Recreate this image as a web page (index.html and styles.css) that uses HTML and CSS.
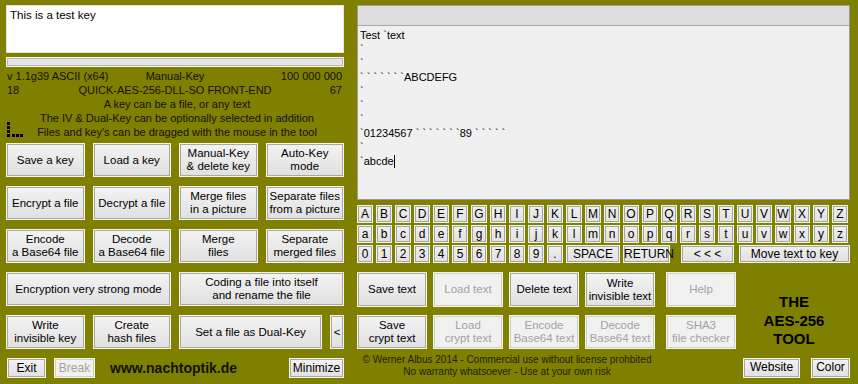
FILE: index.html
```html
<!DOCTYPE html>
<html lang="en">

<head>
    <meta charset="UTF-8">
    <title>Quick AES-256 Front-End</title>
    <link rel="stylesheet" href="styles.css">
</head>

<body>

    <div id="app">

        <!-- Left column: key, info and file functions -->
        <div class="left-col">
            <div class="key-box">This is a test key</div>
            <div class="progress"><div class="progress-inner"></div></div>

            <div class="info">
                <div class="info-row">
                    <span class="al-left">v 1.1g39 ASCII (x64)</span>
                    <span>Manual-Key</span>
                    <span class="al-right">100 000 000</span>
                </div>
                <div class="info-row">
                    <span class="al-left">18</span>
                    <span>QUICK-AES-256-DLL-SO FRONT-END</span>
                    <span class="al-right">67</span>
                </div>
                <div class="info-line">A key can be a file, or any text</div>
                <div class="info-line">The IV &amp; Dual-Key can be optionally selected in addition</div>
                <div class="info-line">Files and key's can be dragged with the mouse in the tool</div>

                <svg class="drag-icon" width="18" height="16" viewBox="0 0 18 16">
                    <rect x="1" y="0" width="3" height="3" fill="#000" />
                    <rect x="1" y="4" width="3" height="3" fill="#000" />
                    <rect x="1" y="8" width="3" height="3" fill="#000" />
                    <rect x="1" y="12" width="3" height="3" fill="#000" />
                    <rect x="6" y="12" width="3" height="3" fill="#000" />
                    <rect x="10" y="12" width="3" height="3" fill="#000" />
                    <rect x="14" y="12" width="3" height="3" fill="#000" />
                </svg>
            </div>

            <div class="file-grid">
                <button class="btn">Save a key</button>
                <button class="btn">Load a key</button>
                <button class="btn">Manual-Key<br>&amp; delete key</button>
                <button class="btn">Auto-Key<br>mode</button>

                <button class="btn">Encrypt a file</button>
                <button class="btn">Decrypt a file</button>
                <button class="btn">Merge files<br>in a picture</button>
                <button class="btn">Separate files<br>from a picture</button>

                <button class="btn">Encode<br>a Base64 file</button>
                <button class="btn">Decode<br>a Base64 file</button>
                <button class="btn">Merge<br>files</button>
                <button class="btn">Separate<br>merged files</button>

                <button class="btn span-2">Encryption very strong mode</button>
                <button class="btn span-2">Coding a file into itself<br>and rename the file</button>

                <button class="btn">Write<br>invisible key</button>
                <button class="btn">Create<br>hash files</button>
                <div class="span-2 dual-key">
                    <button class="btn dual-btn">Set a file as Dual-Key</button>
                    <button class="btn arrow-btn">&lt;</button>
                </div>
            </div>

            <div class="bottom-bar">
                <button class="btn small-btn exit-btn">Exit</button>
                <button class="btn small-btn break-btn" disabled>Break</button>
                <span class="site-name">www.nachtoptik.de</span>
                <button class="btn small-btn minimize-btn">Minimize</button>
            </div>
        </div>

        <!-- Right column: text editor, keyboard and text functions -->
        <div class="right-col">
            <div class="text-panel">
                <div class="text-header"></div>
                <div class="text-body">
                    <div class="text-line">Test `text</div>
                    <div class="text-line">`</div>
                    <div class="text-line">`</div>
                    <div class="text-line">` ` ` ` ` ` `ABCDEFG</div>
                    <div class="text-line">`</div>
                    <div class="text-line">`</div>
                    <div class="text-line">`</div>
                    <div class="text-line">`01234567 ` ` ` ` ` ` `89 ` ` ` ` `</div>
                    <div class="text-line">`</div>
                    <div class="text-line">`abcde<span class="caret"></span></div>
                </div>
            </div>

            <div class="keyboard">
                <div class="key-row" id="upper-row"></div>
                <div class="key-row" id="lower-row"></div>
                <div class="key-row" id="digit-row">
                    <button class="key space-key">SPACE</button>
                    <button class="key return-key">RETURN</button>
                    <button class="key back-key">&lt; &lt; &lt;</button>
                    <button class="key move-key">Move text to key</button>
                </div>
            </div>

            <div class="text-actions">
                <div class="text-left">
                    <div class="text-grid">
                        <button class="btn">Save text</button>
                        <button class="btn" disabled>Load text</button>
                        <button class="btn">Delete text</button>
                        <button class="btn">Write<br>invisible text</button>
                        <button class="btn help-btn" disabled>Help</button>

                        <button class="btn">Save<br>crypt text</button>
                        <button class="btn" disabled>Load<br>crypt text</button>
                        <button class="btn" disabled>Encode<br>Base64 text</button>
                        <button class="btn" disabled>Decode<br>Base64 text</button>
                        <button class="btn help-btn" disabled>SHA3<br>file checker</button>
                    </div>
                    <div class="copyright">
                        <div>&copy; Werner Albus 2014 - Commercial use without license prohbited</div>
                        <div>No warranty whatsoever - Use at your own risk</div>
                    </div>
                </div>

                <div class="text-right">
                    <div class="tool-title">THE<br>AES-256<br>TOOL</div>
                    <div class="corner-buttons">
                        <button class="btn small-btn website-btn">Website</button>
                        <button class="btn small-btn color-btn">Color</button>
                    </div>
                </div>
            </div>
        </div>

    </div>

    <script>
        // Build the letter rows of the on-screen keyboard
        function addKeys(rowId, chars, before) {
            const row = document.getElementById(rowId);
            chars.split('').forEach(ch => {
                const key = document.createElement('button');
                key.className = 'key';
                key.textContent = ch;
                row.insertBefore(key, before ? row.querySelector(before) : null);
            });
        }

        addKeys('upper-row', 'ABCDEFGHIJKLMNOPQRSTUVWXYZ');
        addKeys('lower-row', 'abcdefghijklmnopqrstuvwxyz');
        addKeys('digit-row', '0123456789.', '.space-key');
    </script>

</body>

</html>
```

FILE: styles.css
```css
html,
body {
    margin: 0;
    padding: 0;
}

body {
    width: 858px;
    height: 384px;
    overflow: hidden;
    background-color: #808000;
    font-family: "Liberation Sans", Arial, sans-serif;
    font-size: 11px;
    color: #000;
}

#app {
    display: flex;
    gap: 13px;
    padding: 5px 0 0 6px;
}

/* Left column */
.left-col {
    width: 338px;
}

.key-box {
    box-sizing: border-box;
    height: 48px;
    padding: 2px 3px;
    background-color: #fff;
    border: 1px solid #e4e4e4;
    font-size: 11.5px;
    line-height: 14px;
}

.progress {
    box-sizing: border-box;
    height: 10px;
    margin-top: 4px;
    border: 1px solid #f8f8f0;
}

.progress-inner {
    height: 100%;
    background-color: #e6e6e6;
    box-shadow: inset 0 0 0 1px #b4b4b4;
}

.info {
    position: relative;
    margin-top: 2px;
    line-height: 14px;
    color: #111;
}

.info-row {
    display: grid;
    grid-template-columns: 1fr auto 1fr;
    text-align: center;
}

.al-left {
    text-align: left;
    padding-left: 1px;
}

.al-right {
    text-align: right;
    padding-right: 2px;
}

.info-line {
    text-align: center;
    padding-left: 4px;
}

.drag-icon {
    position: absolute;
    left: 0;
    top: 53px;
}

/* Buttons */
.btn {
    box-sizing: border-box;
    margin: 0;
    padding: 0;
    border: 1px solid #f6f6e4;
    box-shadow: inset 0 0 0 1px #a8a8a8;
    background: linear-gradient(#f3f3f3, #e0e0e0);
    font-family: inherit;
    font-size: 11.5px;
    line-height: 13px;
    color: #000;
    text-align: center;
}

.btn:disabled {
    background: #f1f1f1;
    box-shadow: inset 0 0 0 1px #cfcfcf;
    color: #a2a2a2;
}

.file-grid {
    display: grid;
    grid-template-columns: repeat(4, 1fr);
    grid-auto-rows: 34px;
    column-gap: 8px;
    row-gap: 9px;
    margin-top: 4px;
}

.span-2 {
    grid-column: span 2;
}

.dual-key {
    display: flex;
    gap: 8px;
}

.dual-btn {
    flex: 1;
}

.arrow-btn {
    width: 14px;
}

.bottom-bar {
    display: flex;
    align-items: center;
    height: 20px;
    margin-top: 9px;
}

.small-btn {
    height: 20px;
    font-size: 12px;
}

.exit-btn {
    width: 39px;
    margin-left: 1px;
}

.break-btn {
    width: 41px;
    margin-left: 8px;
}

.site-name {
    margin-left: 15px;
    font-size: 14px;
    font-weight: bold;
    color: #111100;
}

.minimize-btn {
    width: 55px;
    margin-left: auto;
}

/* Right column */
.right-col {
    width: 493px;
}

.text-panel {
    box-sizing: border-box;
    height: 195px;
    border: 1px solid #9c9c9c;
    background-color: #f0f0f0;
}

.text-header {
    height: 19px;
    background-color: #dcdcdc;
    border-bottom: 1px solid #a8a8a8;
}

.text-body {
    padding: 2px 2px;
    line-height: 14px;
    color: #000;
}

.text-line {
    white-space: pre;
}

.caret {
    display: inline-block;
    width: 0;
    height: 13px;
    border-left: 1px solid #000;
    vertical-align: -3px;
}

/* On-screen keyboard */
.keyboard {
    display: flex;
    flex-direction: column;
    gap: 2px;
    margin-top: 5px;
}

.key-row {
    display: flex;
    gap: 3px;
    height: 18px;
}

.key {
    box-sizing: border-box;
    width: 16px;
    height: 18px;
    margin: 0;
    padding: 0;
    border: 1px solid #f4f4e2;
    box-shadow: inset 0 0 0 1px #a6a6a6;
    background: linear-gradient(#f0f0f0, #e0e0e0);
    font-family: inherit;
    font-size: 12px;
    color: #000;
}

.space-key {
    width: 54px;
}

.return-key {
    width: 47px;
}

.back-key {
    width: 53px;
    margin-left: 8px;
}

.move-key {
    width: 111px;
    margin-left: 2px;
}

/* Text functions */
.text-actions {
    display: flex;
    margin-top: 9px;
}

.text-grid {
    display: grid;
    grid-template-columns: 70px 70px 70px 70px 75px;
    grid-template-rows: 35px 34px;
    column-gap: 6px;
    row-gap: 8px;
}

.help-btn {
    width: 70px;
    justify-self: end;
}

.copyright {
    width: 300px;
    margin-top: 5px;
    font-size: 10px;
    line-height: 12px;
    text-align: center;
    color: #1e1e10;
}

.text-right {
    display: flex;
    flex-direction: column;
    width: 114px;
}

.tool-title {
    padding-top: 21px;
    padding-left: 2px;
    font-size: 15px;
    font-weight: bold;
    line-height: 18.5px;
    text-align: center;
    color: #000;
}

.corner-buttons {
    display: flex;
    justify-content: flex-end;
    gap: 11px;
    margin-top: 9px;
}

.website-btn {
    width: 57px;
}

.color-btn {
    width: 39px;
}
```
